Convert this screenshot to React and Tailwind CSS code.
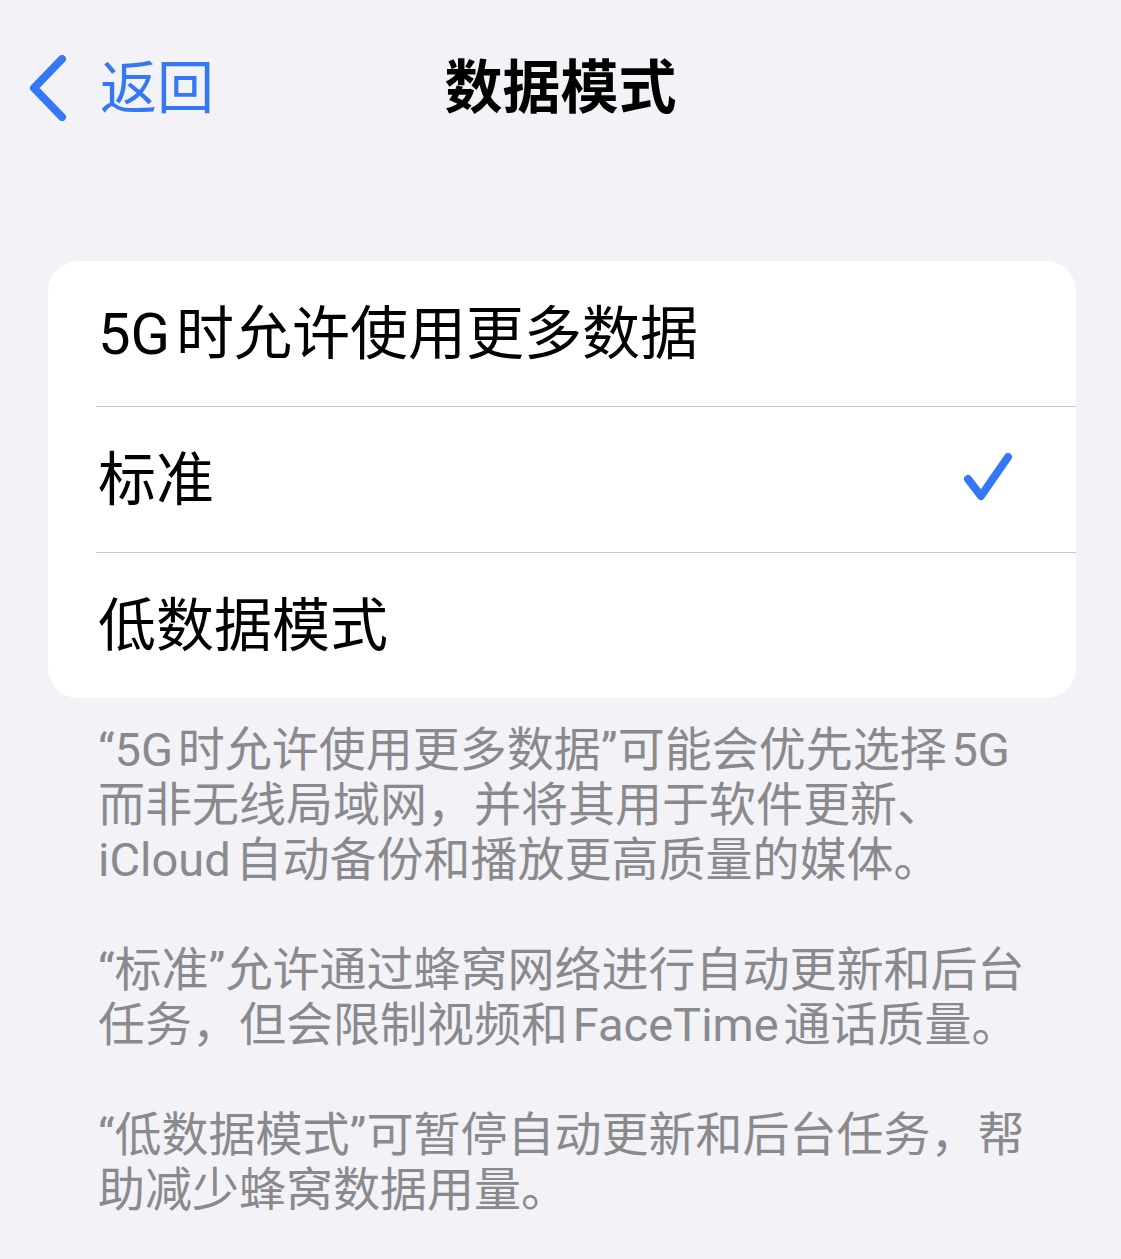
import React, { useState } from "react";

const FONT = "font-['Roboto','Noto_Sans_CJK_SC',sans-serif]";

// hair space between latin and CJK runs
const hs = "\u200A";

const options = [
    { id: "5g", label: `5G${hs}时允许使用更多数据` },
    { id: "standard", label: "标准" },
    { id: "low", label: "低数据模式" },
];

// each paragraph is pre-broken into its lines
const notes = [
    [`“5G${hs}时允许使用更多数据”可能会优先选择${hs}5G`, "而非无线局域网，并将其用于软件更新、", `iCloud${hs}自动备份和播放更高质量的媒体。`],
    ["“标准”允许通过蜂窝网络进行自动更新和后台", `任务，但会限制视频和${hs}FaceTime${hs}通话质量。`],
    ["“低数据模式”可暂停自动更新和后台任务，帮", "助减少蜂窝数据用量。"],
];

function BackChevron() {
    return (
        <svg width="44" height="66" viewBox="0 0 44 66" fill="none">
            <path d="M34 4 L6 33 L34 62" stroke="#3478f6" strokeWidth="8" strokeLinecap="round" strokeLinejoin="round" />
        </svg>
    );
}

function Check() {
    return (
        <svg width="56" height="56" viewBox="0 0 56 56" fill="none">
            <path d="M7 27 L20 44 L47 5" stroke="#3478f6" strokeWidth="8" strokeLinecap="round" strokeLinejoin="round" />
        </svg>
    );
}

export default function App() {
    const [mode, setMode] = useState("standard");

    return (
        <div className={`min-h-[1259px] w-[1121px] bg-[#f2f2f7] ${FONT}`}>
            <div className="grid h-[176px] grid-cols-[1fr_auto_1fr] items-center">
                <button className="flex items-center gap-[28px] pl-[28px] text-[57px] leading-none text-[#3478f6]">
                    <BackChevron />
                    <span>返回</span>
                </button>
                <h1 className="text-[58px] font-bold leading-none text-black">数据模式</h1>
                <div />
            </div>

            <div className="ml-[48px] mt-[85px] w-[1028px] overflow-hidden rounded-[30px] bg-white">
                {options.map((o, i) => (
                    <div key={o.id}>
                        {i > 0 && <div className="ml-[48px] h-px bg-[#c8c7cc]" />}
                        <button
                            onClick={() => setMode(o.id)}
                            className="flex h-[145px] w-full items-center justify-between pl-[50px] pr-[59px] text-left"
                        >
                            <span className="text-[58px] leading-none text-black">{o.label}</span>
                            {mode === o.id && <Check />}
                        </button>
                    </div>
                ))}
            </div>

            <div className="space-y-[55px] pl-[98px] pt-[24px] text-[47px] leading-[55px] text-[#8a8a8e]">
                {notes.map((p, i) => (
                    <p key={i}>
                        {p.map((line) => (
                            <span key={line} className="block whitespace-nowrap">{line}</span>
                        ))}
                    </p>
                ))}
            </div>
        </div>
    );
}
